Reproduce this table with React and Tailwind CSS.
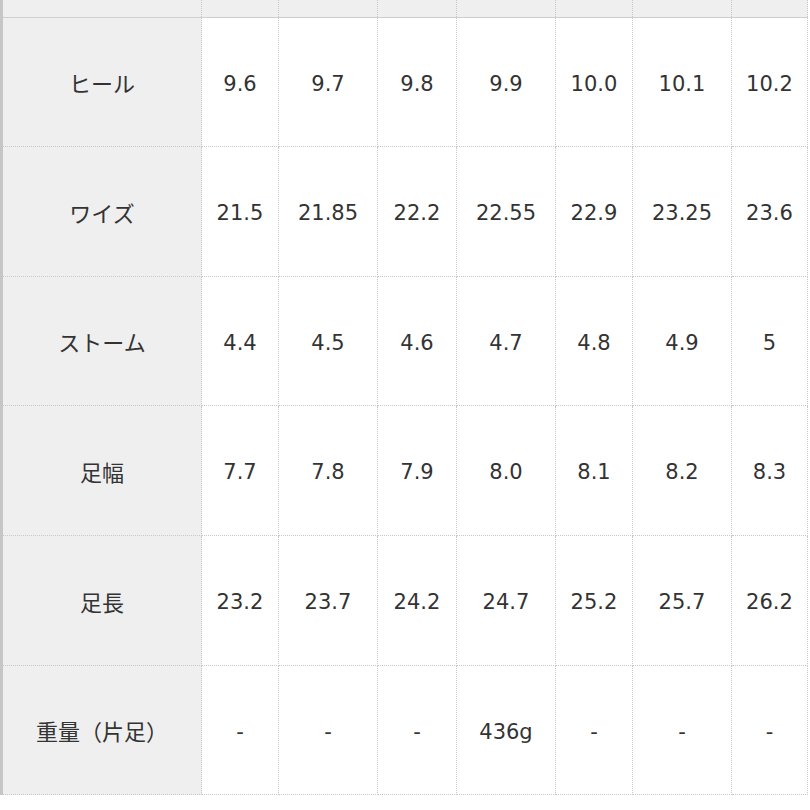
import React from 'react';

const cols = ['w-[199px]', 'w-[77px]', 'w-[99px]', 'w-[79px]', 'w-[99px]', 'w-[77px]', 'w-[99px]', 'w-[76px]'];
const heights = ['h-[129px]', 'h-[130px]', 'h-[129px]', 'h-[130px]', 'h-[130px]', 'h-[129px]'];

const rows = [
    { label: 'ヒール', values: ['9.6', '9.7', '9.8', '9.9', '10.0', '10.1', '10.2'] },
    { label: 'ワイズ', values: ['21.5', '21.85', '22.2', '22.55', '22.9', '23.25', '23.6'] },
    { label: 'ストーム', values: ['4.4', '4.5', '4.6', '4.7', '4.8', '4.9', '5'] },
    { label: '足幅', values: ['7.7', '7.8', '7.9', '8.0', '8.1', '8.2', '8.3'] },
    { label: '足長', values: ['23.2', '23.7', '24.2', '24.7', '25.2', '25.7', '26.2'] },
    { label: '重量（片足）', values: ['-', '-', '-', '436g', '-', '-', '-'] },
];

export default function App() {
    return (
        <div
            className="w-[810px] h-[810px] bg-white flex text-[#333] text-[21px] overflow-hidden"
            style={{ fontFamily: '"DejaVu Sans", "Noto Sans CJK JP", sans-serif' }}
        >
            <div className="w-[3px] h-[795px] bg-[#c6c6c6] shrink-0" />
            <div className="flex flex-col">
                {/* ヘッダー行（上端のみ見えている） */}
                <div className="flex h-[18px] bg-[#efefef] border-b border-[#cfcfcf]">
                    {cols.map((c, i) => (
                        <div key={i} className={`${c} h-full border-r border-dotted border-[#c8c8c8]`} />
                    ))}
                </div>
                {rows.map((r, ri) => (
                    <div key={r.label} className={`flex ${heights[ri]}`}>
                        <div className={`${cols[0]} h-full pt-[5px] bg-[#efefef] border-r border-b border-dotted border-[#c8c8c8] flex items-center justify-center text-[22px]`}>
                            {r.label}
                        </div>
                        {r.values.map((v, i) => (
                            <div
                                key={i}
                                className={`${cols[i + 1]} h-full pt-[5px] border-r border-b border-dotted border-[#c8c8c8] flex items-center justify-center`}
                            >
                                {v}
                            </div>
                        ))}
                    </div>
                ))}
            </div>
        </div>
    );
}
